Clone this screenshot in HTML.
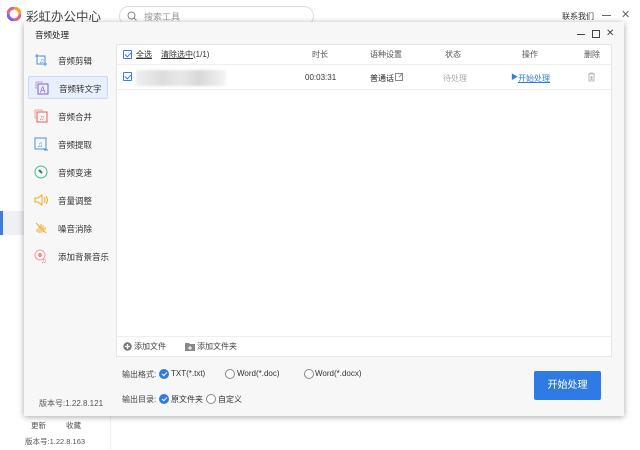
<!DOCTYPE html>
<html><head><meta charset="utf-8"><style>
*{margin:0;padding:0;box-sizing:border-box}
body{width:640px;height:450px;overflow:hidden;background:#fff;font-family:"Liberation Sans","Noto Sans CJK SC",sans-serif;font-size:8px;color:#333;position:relative}
.abs{position:absolute;white-space:nowrap}
.cb{position:absolute;width:9px;height:9px;border:1px solid #3b7ddd;border-radius:1px;background:#fff}
.cb:after{content:"";position:absolute;left:2px;top:0px;width:3px;height:5px;border:solid #3b7ddd;border-width:0 1.3px 1.3px 0;transform:rotate(45deg)}
.rad{position:absolute;width:10px;height:10px;border-radius:50%;border:1px solid #888;background:#fff}
.rad.on{background:#2f7be5;border-color:#2f7be5}
.rad.on:after{content:"";position:absolute;left:3px;top:1px;width:2px;height:4px;border:solid #fff;border-width:0 1.3px 1.3px 0;transform:rotate(45deg)}
.item{position:absolute;left:28px;width:80px;height:23px}
.item span{position:absolute;left:30px;top:6px;font-size:8.5px;color:#333;white-space:nowrap}
.ic{position:absolute;left:6px;top:4px;width:14px;height:14px}
</style></head><body>
<svg class="abs" style="left:7px;top:7px" width="14" height="14" viewBox="0 0 14 14"><circle cx="7" cy="7" r="6" fill="none" stroke="#e85c8f" stroke-width="3"/><path d="M7 1a6 6 0 0 1 6 6" stroke="#f5a623" stroke-width="3" fill="none"/><path d="M1 7a6 6 0 0 0 6 6" stroke="#7b61ff" stroke-width="3" fill="none"/></svg>
<div class="abs" style="left:26px;top:6px;font-size:12.5px;color:#444">彩虹办公中心</div>
<div class="abs" style="left:119px;top:6px;width:195px;height:20px;border:1px solid #ddd;border-radius:10px"></div>
<svg class="abs" style="left:127px;top:11px" width="10" height="10"><circle cx="4.5" cy="4.5" r="3.5" fill="none" stroke="#888"/><path d="M7 7l2.5 2.5" stroke="#888"/></svg>
<div class="abs" style="left:144px;top:10px;font-size:9px;color:#999">搜索工具</div>
<div class="abs" style="left:562px;top:11px;font-size:8px;color:#333">联系我们</div>
<div class="abs" style="left:602px;top:15px;width:9px;height:1px;background:#666"></div>
<div class="abs" style="left:621px;top:8px;font-size:11px;color:#666">✕</div>
<div class="abs" style="left:110px;top:30px;width:1px;height:420px;background:#eee"></div>
<div class="abs" style="left:0;top:211px;width:24px;height:24px;background:#eef0f4"></div>
<div class="abs" style="left:0;top:211px;width:3px;height:24px;background:#3b7ddd"></div>
<div class="abs" style="left:31px;top:420px;font-size:7.5px;color:#555">更新</div>
<div class="abs" style="left:66px;top:420px;font-size:7.5px;color:#555">收藏</div>
<div class="abs" style="left:25px;top:436px;font-size:7.5px;color:#555">版本号:1.22.8.163</div>

<div class="abs" style="left:24px;top:22px;width:600px;height:394px;background:#f7f7f7;box-shadow:0 1px 6px rgba(0,0,0,.35)"></div>
<div class="abs" style="left:35px;top:29px;font-size:8.5px;color:#222">音频处理</div>
<div class="abs" style="left:577px;top:34px;width:8px;height:1px;background:#444"></div>
<div class="abs" style="left:592px;top:30px;width:8px;height:8px;border:1px solid #444"></div>
<div class="abs" style="left:606px;top:28px;font-size:10px;color:#444">✕</div>

<div class="item" style="top:49px"><svg class="ic" viewBox="0 0 14 14"><path d="M3 1v10h10M1 3h10v10" fill="none" stroke="#4a90e2"/><text x="5" y="10" font-size="7" fill="#4a90e2">♫</text></svg><span>音频剪辑</span></div>
<div class="item" style="top:76px;background:#e8f0fb;border:1px solid #c6daf5;border-radius:2px"><svg class="ic" viewBox="0 0 14 14"><rect x="3" y="3" width="10" height="10" fill="none" stroke="#8a5cd6"/><path d="M1 1h6v2M1 1v6h2" fill="none" stroke="#b9a0ea"/><text x="5" y="11.5" font-size="8" fill="#8a5cd6" font-family="Liberation Sans">A</text></svg><span>音频转文字</span></div>
<div class="item" style="top:105px"><svg class="ic" viewBox="0 0 14 14"><rect x="3" y="3" width="10" height="10" fill="none" stroke="#e85c5c"/><path d="M1 1h7v2M1 1v8h2" fill="none" stroke="#f0a0a0"/><text x="5" y="11" font-size="7" fill="#e85c5c">♫</text></svg><span>音频合并</span></div>
<div class="item" style="top:133px"><svg class="ic" viewBox="0 0 14 14"><rect x="1" y="1" width="11" height="11" fill="none" stroke="#4a90e2"/><text x="3" y="10" font-size="8" fill="#4a90e2">♫</text><path d="M10 13h4" stroke="#4a90e2"/></svg><span>音频提取</span></div>
<div class="item" style="top:161px"><svg class="ic" viewBox="0 0 14 14"><circle cx="7" cy="7" r="6" fill="none" stroke="#3cc08a"/><path d="M5 5l3 3" stroke="#1a8a5a" stroke-width="2"/></svg><span>音频变速</span></div>
<div class="item" style="top:189px"><svg class="ic" viewBox="0 0 14 14"><path d="M1 5h3l4-3v10l-4-3H1z" fill="none" stroke="#f5a623"/><path d="M10 4q2 3 0 6M12 3q3 4 0 8" fill="none" stroke="#f5a623"/></svg><span>音量调整</span></div>
<div class="item" style="top:217px"><svg class="ic" viewBox="0 0 14 14"><path d="M2 2l10 10M3 8v3M5 5v7M7 3v9M9 4v7M11 6v3" stroke="#f5a623"/></svg><span>噪音消除</span></div>
<div class="item" style="top:245px"><svg class="ic" viewBox="0 0 14 14"><circle cx="6" cy="6" r="5" fill="none" stroke="#f0a0a0"/><circle cx="6" cy="6" r="1.2" fill="none" stroke="#e85c5c"/><text x="7" y="14" font-size="7" fill="#e85c5c">♫</text></svg><span>添加背景音乐</span></div>
<div class="abs" style="left:39px;top:398px;font-size:8px;color:#555">版本号:1.22.8.121</div>

<div class="abs" style="left:116px;top:44px;width:496px;height:313px;background:#fff;border:1px solid #e6e6e6"></div>
<div class="abs" style="left:117px;top:64px;width:494px;height:1px;background:#eee"></div>
<div class="abs" style="left:117px;top:89px;width:494px;height:1px;background:#eee"></div>
<div class="abs" style="left:117px;top:336px;width:494px;height:1px;background:#eee"></div>
<div class="cb" style="left:123px;top:50px"></div>
<div class="abs" style="left:136px;top:49px;font-size:8px;text-decoration:underline">全选</div>
<div class="abs" style="left:161px;top:49px;font-size:8px"><u>清除选中</u>(1/1)</div>
<div class="abs" style="left:312px;top:49px;font-size:8px;color:#555">时长</div>
<div class="abs" style="left:370px;top:49px;font-size:8px;color:#555">语种设置</div>
<div class="abs" style="left:445px;top:49px;font-size:8px;color:#555">状态</div>
<div class="abs" style="left:522px;top:49px;font-size:8px;color:#555">操作</div>
<div class="abs" style="left:584px;top:49px;font-size:8px;color:#555">删除</div>
<div class="cb" style="left:123px;top:72px"></div>
<div class="abs" style="left:136px;top:70px;width:90px;height:16px;background:linear-gradient(90deg,#eee,#ddd 30%,#e8e8e8 50%,#d8d8d8 70%,#f4f4f4);filter:blur(1px)"></div>
<div class="abs" style="left:305px;top:73px;font-size:8px">00:03:31</div>
<div class="abs" style="left:370px;top:73px;font-size:8px;color:#222">普通话</div>
<svg class="abs" style="left:395px;top:72px" width="9" height="9"><rect x=".5" y="1.5" width="7" height="7" fill="none" stroke="#888"/><path d="M4 5l4-4" stroke="#888"/></svg>
<div class="abs" style="left:443px;top:73px;font-size:8px;color:#aaa">待处理</div>
<div class="abs" style="left:511px;top:72px;font-size:7px;color:#2f7be5">▶</div>
<div class="abs" style="left:518px;top:73px;font-size:8px;color:#2f7be5;text-decoration:underline">开始处理</div>
<svg class="abs" style="left:587px;top:72px" width="9" height="10"><path d="M1 2h7M3 2V1h3v1M2 2v7h5V2M4 4v4M5 4v4" fill="none" stroke="#aaa" stroke-width=".8"/></svg>

<svg class="abs" style="left:123px;top:342px" width="9" height="9"><circle cx="4.5" cy="4.5" r="4.2" fill="#777"/><path d="M4.5 2v5M2 4.5h5" stroke="#fff" stroke-width="1.3"/></svg>
<div class="abs" style="left:134px;top:341px;font-size:8px;color:#444">添加文件</div>
<svg class="abs" style="left:185px;top:342px" width="10" height="9"><path d="M0 1h4l1 1h5v7H0z" fill="#888"/><path d="M5 4v4M3 6h4" stroke="#fff"/></svg>
<div class="abs" style="left:197px;top:341px;font-size:8px;color:#444">添加文件夹</div>

<div class="abs" style="left:122px;top:369px;font-size:8px;color:#444">输出格式:</div>
<div class="rad on" style="left:159px;top:369px"></div>
<div class="abs" style="left:171px;top:369px;font-size:8px">TXT(*.txt)</div>
<div class="rad" style="left:225px;top:369px"></div>
<div class="abs" style="left:237px;top:369px;font-size:8px">Word(*.doc)</div>
<div class="rad" style="left:304px;top:369px"></div>
<div class="abs" style="left:315px;top:369px;font-size:8px">Word(*.docx)</div>
<div class="abs" style="left:122px;top:394px;font-size:8px;color:#444">输出目录:</div>
<div class="rad on" style="left:159px;top:394px"></div>
<div class="abs" style="left:171px;top:394px;font-size:8px">原文件夹</div>
<div class="rad" style="left:206px;top:394px"></div>
<div class="abs" style="left:218px;top:394px;font-size:8px">自定义</div>
<div class="abs" style="left:534px;top:371px;width:67px;height:29px;background:#2f7be5;border-radius:2px;color:#fff;font-size:10px;text-align:center;line-height:29px">开始处理</div>
</body></html>
